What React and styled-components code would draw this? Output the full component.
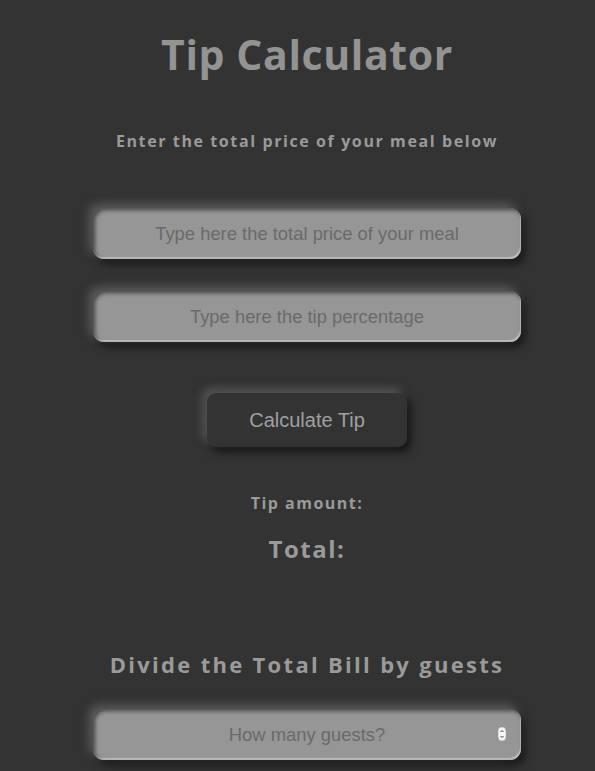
import styled, { createGlobalStyle } from "styled-components";

const GlobalStyle = createGlobalStyle`
  html, body {
    margin: 0;
    padding: 0;
    background: #333333;
    overflow: hidden;
  }
`;

const Page = styled.main`
  display: flex;
  flex-direction: column;
  align-items: center;
  min-height: 100vh;
  padding-left: 19px;
  background: #333333;
  color: #939393;
  font-family: "Open Sans", "DejaVu Sans", sans-serif;
`;

const Title = styled.h1`
  margin: 29px 0 0;
  font-size: 41px;
  line-height: 50px;
  font-weight: 700;
  letter-spacing: 0.6px;
  color: #939393;
`;

const Subtitle = styled.h3`
  margin: 52px 0 0;
  font-size: 16px;
  line-height: 20px;
  font-weight: 700;
  letter-spacing: 1.6px;
  color: #9a9a9a;
`;

const Field = styled.div`
  position: relative;
  width: 428px;
  margin-top: ${(p) => p.$top}px;
`;

const Input = styled.input`
  box-sizing: border-box;
  width: 100%;
  height: 51px;
  border: none;
  border-radius: 11px;
  background: #969696;
  color: #6a6a6a;
  font-family: "Liberation Sans", Arial, sans-serif;
  font-size: 18.4px;
  text-align: center;
  outline: none;
  box-shadow: -4px -4px 10px rgba(120, 120, 120, 0.6),
    4px 5px 9px rgba(0, 0, 0, 0.55), inset 2px 2px 4px rgba(40, 40, 40, 0.75),
    inset -1px -2px 1px rgba(200, 200, 200, 0.9);
  -moz-appearance: textfield;

  &::placeholder {
    color: #6a6a6a;
  }
  &::-webkit-outer-spin-button,
  &::-webkit-inner-spin-button {
    -webkit-appearance: none;
    margin: 0;
  }
`;

const Spinner = styled.svg`
  position: absolute;
  right: 15px;
  top: 18px;
  width: 8px;
  height: 14px;
`;

const Button = styled.button`
  margin-top: 51px;
  width: 200px;
  height: 54px;
  border: none;
  border-radius: 9px;
  background: #333333;
  color: #a0a0a0;
  font-family: "Liberation Sans", Arial, sans-serif;
  font-size: 20px;
  cursor: pointer;
  box-shadow: -5px -5px 9px rgba(110, 110, 110, 0.55),
    4px 5px 8px rgba(0, 0, 0, 0.6);
`;

const Label = styled.p`
  margin: ${(p) => p.$top}px 0 0;
  font-size: ${(p) => p.$size}px;
  line-height: ${(p) => p.$line}px;
  font-weight: 700;
  letter-spacing: ${(p) => p.$spacing}px;
  color: #9a9a9a;
`;

function App() {
  return (
    <>
      <GlobalStyle />
      <Page>
        <Title>Tip Calculator</Title>
        <Subtitle>Enter the total price of your meal below</Subtitle>
        <Field $top={57}>
          <Input type="number" placeholder="Type here the total price of your meal" />
        </Field>
        <Field $top={32}>
          <Input type="number" placeholder="Type here the tip percentage" />
        </Field>
        <Button>Calculate Tip</Button>
        <Label $top={46} $size={16} $line={20} $spacing={1.5}>
          Tip amount:
        </Label>
        <Label $top={22} $size={24} $line={28} $spacing={1.5}>
          Total:
        </Label>
        <Label $top={87} $size={22} $line={28} $spacing={2.3}>
          Divide the Total Bill by guests
        </Label>
        <Field $top={31}>
          <Input type="number" placeholder="How many guests?" />
          <Spinner viewBox="0 0 8 14">
            <rect x="0" y="0" width="8" height="14" rx="4" fill="#f6f6f6" stroke="#9a9a9a" strokeWidth="0.5" />
            <path d="M2.5 5 L4 3.5 L5.5 5" fill="none" stroke="#444" strokeWidth="1" />
            <path d="M2.5 9 L4 10.5 L5.5 9" fill="none" stroke="#444" strokeWidth="1" />
          </Spinner>
        </Field>
      </Page>
    </>
  );
}

export default App;
